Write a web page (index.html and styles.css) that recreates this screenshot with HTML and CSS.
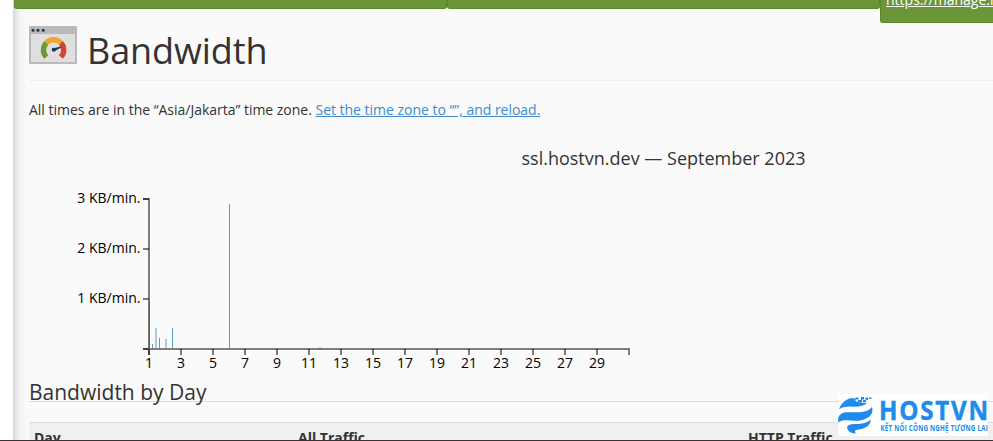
FILE: index.html
```html
<!DOCTYPE html>
<html lang="en">
<head>
<meta charset="utf-8">
<title>Bandwidth</title>
<link rel="stylesheet" href="styles.css">
</head>
<body>
<main class="page">
  <div class="notices">
    <div class="notice"></div>
    <div class="notice"></div>
    <div class="notice notice-tall"><a class="notice-link">https://manage.hostvn</a></div>
  </div>
  <header class="heading">
    <svg class="heading-icon" width="48" height="38" viewBox="0 0 48 38">
      <rect width="48" height="38" rx="1" fill="#bababa"/>
      <rect x="2" y="8" width="44" height="28" rx="1" fill="#dfdfdf"/>
      <g fill="#233746"><circle cx="4" cy="4.3" r="1.5"/><circle cx="9" cy="4.3" r="1.5"/><circle cx="14.2" cy="4.3" r="1.5"/></g>
      <g fill="none" stroke-width="5.4">
        <path d="M17.3 31A10.3 10.3 0 0 1 17.3 16.8" stroke="#6c9a38"/>
        <path d="M17.3 16.8A10.3 10.3 0 0 1 31.9 16.8" stroke="#eda62c"/>
        <path d="M31.9 16.8A10.3 10.3 0 0 1 31.9 31" stroke="#d5432f"/>
      </g>
      <path d="M24.5 22.2L32 20.5L32.3 21.5L25.2 25.2z" fill="#233746"/>
      <circle cx="24.7" cy="23.8" r="2" fill="#233746"/>
    </svg>
    <h1 class="title">Bandwidth</h1>
  </header>
  <p class="timezone">All times are in the “Asia/Jakarta” time zone. <a class="link">Set the time zone to “”, and reload.</a></p>
  <h4 class="chart-title">ssl.hostvn.dev — September 2023</h4>
  <svg class="chart" width="640" height="200" viewBox="0 180 640 200">
    <g fill="none" stroke="#000" stroke-opacity=".5" stroke-width="2">
      <path d="M143 199H149V349H143M149 355V349H629V355"/>
      <path d="M143 199H149M143 249H149M143 299H149M143 349H149M149 349V355M181 349V355M213 349V355M245 349V355M277 349V355M309 349V355M341 349V355M373 349V355M405 349V355M437 349V355M469 349V355M501 349V355M533 349V355M565 349V355M597 349V355"/>
    </g>
    <g fill="#5a9bc9">
      <rect x="149" y="301" width="1" height="47" fill="#2f6688"/>
      <rect x="152" y="344" width="1" height="4"/>
      <rect x="155" y="328" width="2" height="20" fill="#abcbe3"/>
      <rect x="159" y="338" width="1" height="10"/>
      <rect x="165" y="339" width="2" height="9" fill="#abcbe3"/>
      <rect x="172" y="328" width="1" height="20"/>
      <rect x="229" y="204" width="1" height="144"/>
      <rect x="319" y="347" width="2" height="1" fill="#abcbe3"/>
    </g>
    <g class="y-labels">
      <text x="140.500" y="203">3 KB/min.</text><text x="140.500" y="253">2 KB/min.</text><text x="140.500" y="303">1 KB/min.</text>
    </g>
    <g class="x-labels">
      <text x="149" y="368">1</text><text x="181" y="368">3</text><text x="213" y="368">5</text><text x="245" y="368">7</text><text x="277" y="368">9</text><text x="309" y="368">11</text><text x="341" y="368">13</text><text x="373" y="368">15</text><text x="405" y="368">17</text><text x="437" y="368">19</text><text x="469" y="368">21</text><text x="501" y="368">23</text><text x="533" y="368">25</text><text x="565" y="368">27</text><text x="597" y="368">29</text>
    </g>
  </svg>
  <h2 class="section-title">Bandwidth by Day</h2>
  <div class="table-head"><span>Day</span><span>All Traffic</span><span>HTTP Traffic</span></div>
</main>
<svg class="logo" width="150" height="42" viewBox="0 0 150 42">
  <rect width="150" height="42" fill="#fff"/>
  <g fill="#218be9">
    <path d="M1 15.500C3 9 8 4.500 15 4L17 7L22 8.500L29 9C26 12 21 13 15 12.700C9 12.300 4 13 1 15.500z"/>
    <path d="M.5 28.500C-1 23 2 19 8 18.300C17 17.500 28 20.500 34 13C36 20 31 25 22 26.500C14 27.500 5 24 .5 28.500z"/>
    <path d="M9.500 35C8 31 12 30 18 30C24 30 29 29 32.500 25.500C33 31 28 34.500 21 35.500C17 36 16 37 18 39.500C14 39.500 10.500 38 9.500 35z"/>
    <path d="M14.500 4.500h3v-1h3v2h-3v2h-3zM20 6h3v-3h3v2.500h-2v3h-4zM25 6h2.500v-2.500h2.500v2.500h-2v2h-3zM31 3.500h2.500v1.500h-2.500z"/>
  </g>
  <text class="logo-name" x="41" y="26" textLength="111" lengthAdjust="spacingAndGlyphs">HOSTVN</text>
  <text class="logo-tag" x="42.500" y="37" textLength="107.500" lengthAdjust="spacingAndGlyphs">KẾT NỐI CÔNG NGHỆ TƯƠNG LAI</text>
</svg>
<div class="bottom-edge"></div>
</body>
</html>
```
FILE: styles.css
```css
* { box-sizing: border-box; }
body {
  margin: 0;
  height: 441px;
  overflow: hidden;
  padding-left: 13px;
  background: #fff;
  color: #333;
  font: 14px/20px "Open Sans", sans-serif;
}
.page {
  height: 441px;
  overflow: hidden;
  background: linear-gradient(90deg, #d5d5d5 0, #e7e7e7 3px, #f3f3f3 7px, #fafafa 14px);
}
.notices { display: grid; grid-template-columns: 433px 433px 1fr; height: 26px; align-items: start; padding-left: 1px; }
.notice {
  height: 9px;
  background: #6a9638;
  border: 1px solid #5b882f;
  border-top: 0;
  border-radius: 0 0 3px 3px;
}
.notice-tall { height: 23px; overflow: hidden; padding-left: 5px; border-right: 0; border-bottom-right-radius: 0; }
.notice-link { display: block; margin-top: -10px; color: #fff; text-decoration: underline; white-space: nowrap; }
.heading {
  display: flex;
  gap: 10px;
  height: 55px;
  margin-left: 16px;
  border-bottom: 1px solid #eee;
}
.title { margin: 0; font-size: 36px; font-weight: 400; line-height: 50px; letter-spacing: -.1px; }
.timezone { margin: 19px 0 0 16px; letter-spacing: -.018px; }
.link { color: #428bca; text-decoration: underline; }
.chart-title { margin: 28px 0 0 508.500px; font-size: 18px; line-height: 20px; font-weight: 400; white-space: nowrap; }
.chart { display: block; margin: 12px 0 0 -13px; font-size: 14px; }
.y-labels { text-anchor: end; fill: #000; }
.x-labels { text-anchor: middle; fill: #000; }
.section-title {
  height: 22px;
  margin: 0 0 20px 16px;
  border-bottom: 1px solid #ddd;
  font-size: 21px;
  line-height: 25px;
  font-weight: 400;
}
.table-head {
  display: grid;
  grid-template-columns: 264px 450px 1fr;
  height: 30px;
  margin-left: 16px;
  padding: 5px 5px 0;
  background: #f0f0f0;
  border-top: 1px solid #ddd;
  font-weight: 700;
}
.logo { position: absolute; left: 838px; top: 394px; overflow: hidden; }
.logo-name { font: 700 27px "Open Sans", sans-serif; letter-spacing: 2px; fill: #218be9; stroke: #218be9; stroke-width: .5px; }
.logo-tag { font: 700 8px "Open Sans", sans-serif; letter-spacing: .3px; fill: #218be9; }
.bottom-edge { position: absolute; left: 0; right: 0; top: 440px; height: 1px; background: #3b3034; }
```
